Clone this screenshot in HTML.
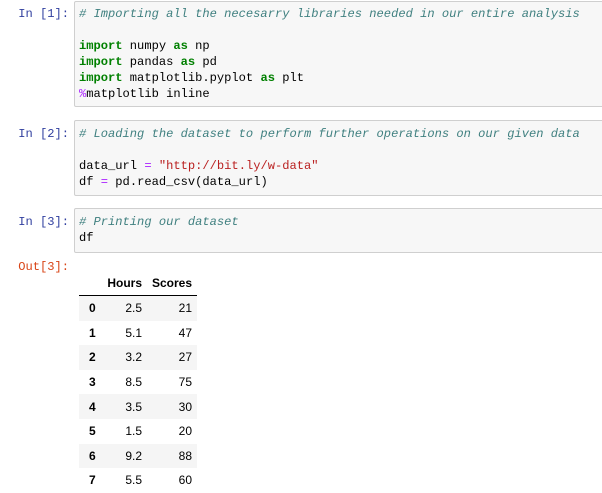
<!DOCTYPE html>
<html><head><style>
body{margin:0;background:#fff;width:602px;height:487px;overflow:hidden;position:relative;font-family:"Liberation Sans",sans-serif}
.p{position:absolute;right:533px;font-family:"Liberation Mono",monospace;font-size:12.1px;color:#303F9F;line-height:16px;white-space:pre}
.o{color:#D84315}
.c{position:absolute;left:74px;width:540px;background:#f7f7f7;border:1px solid #cfcfcf;border-radius:2px;box-sizing:border-box}
pre{margin:0;position:absolute;left:79px;font-family:"Liberation Mono",monospace;font-size:12.1px;line-height:16px;color:#000}
.cm{color:#408080;font-style:italic}.k{color:#008000;font-weight:bold}.s{color:#BA2121}.op{color:#AA22FF}
table{position:absolute;left:79px;top:266px;width:118px;border-collapse:collapse;font-size:12px;color:#000;table-layout:fixed}
th{font-weight:bold;text-align:right;padding:0 5px 0 0;height:24px;}
thead th{border-bottom:1px solid #000;vertical-align:bottom;padding-bottom:5px}
td{text-align:right;padding:0 5px 0 0;height:24.6px}
tbody th{text-align:left;padding-left:10px}
tbody tr:nth-child(odd){background:#f5f5f5}
</style></head><body>
<div class="p" style="top:6px">In [1]:</div>
<div class="c" style="top:1px;height:106px"></div>
<pre style="top:6px"><span class="cm"># Importing all the necesarry libraries needed in our entire analysis</span>

<span class="k">import</span> numpy <span class="k">as</span> np
<span class="k">import</span> pandas <span class="k">as</span> pd
<span class="k">import</span> matplotlib.pyplot <span class="k">as</span> plt
<span class="op">%</span>matplotlib inline</pre>
<div class="p" style="top:126px">In [2]:</div>
<div class="c" style="top:120px;height:76px"></div>
<pre style="top:126px"><span class="cm"># Loading the dataset to perform further operations on our given data</span>

data_url <span class="op">=</span> <span class="s">"http://bit.ly/w-data"</span>
df <span class="op">=</span> pd.read_csv(data_url)</pre>
<div class="p" style="top:214px">In [3]:</div>
<div class="c" style="top:208px;height:45px"></div>
<pre style="top:214px"><span class="cm"># Printing our dataset</span>
df</pre>
<div class="p o" style="top:259px">Out[3]:</div>
<table>
<colgroup><col style="width:26px"><col style="width:42px"><col style="width:50px"></colgroup>
<thead><tr><th></th><th>Hours</th><th>Scores</th></tr></thead>
<tbody>
<tr><th>0</th><td>2.5</td><td>21</td></tr>
<tr><th>1</th><td>5.1</td><td>47</td></tr>
<tr><th>2</th><td>3.2</td><td>27</td></tr>
<tr><th>3</th><td>8.5</td><td>75</td></tr>
<tr><th>4</th><td>3.5</td><td>30</td></tr>
<tr><th>5</th><td>1.5</td><td>20</td></tr>
<tr><th>6</th><td>9.2</td><td>88</td></tr>
<tr><th>7</th><td>5.5</td><td>60</td></tr>
</tbody></table>
</body></html>
